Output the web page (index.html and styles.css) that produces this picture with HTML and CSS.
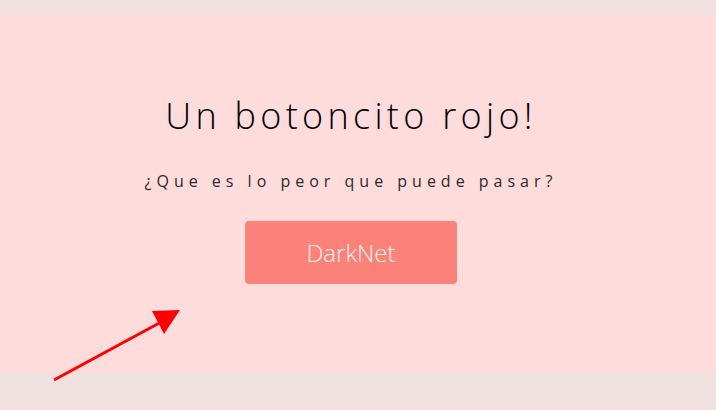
FILE: index.html
```html
<!DOCTYPE html>
<html lang="es">
<head>
<meta charset="utf-8">
<title>Un botoncito rojo</title>
<link rel="stylesheet" href="styles.css">
</head>
<body>
  <section class="hero">
    <h1 class="title">Un botoncito rojo!</h1>
    <p class="subtitle">¿Que es lo peor que puede pasar?</p>
    <a class="btn" href="#">DarkNet</a>
  </section>
  <svg class="arrow" width="140" height="80" viewBox="0 0 140 80">
    <line x1="3" y1="76" x2="112" y2="17" stroke="#ff0000" stroke-width="3"/>
    <polygon points="129,6 101,7 113,30" fill="#ff0000"/>
  </svg>
</body>
</html>
```
FILE: styles.css
```css
html, body {
  margin: 0;
  padding: 0;
}
body {
  background: #f0e0df;
  font-family: "Open Sans", "Lato", sans-serif;
  height: 410px;
  position: relative;
  overflow: hidden;
}
.hero {
  margin-top: 15px;
  height: 357px;
  background: #ffdcdc;
  display: flex;
  flex-direction: column;
  align-items: center;
  padding-top: 78px;
  box-sizing: border-box;
  padding-right: 14px;
}
.title {
  margin: 0;
  font-weight: 300;
  font-size: 36px;
  letter-spacing: 4.3px;
  line-height: 46px;
  color: #000;
}
.subtitle {
  margin: 31px 0 0;
  font-weight: 400;
  font-size: 16px;
  letter-spacing: 5px;
  line-height: 22px;
  color: #2a2a2a;
}
.btn {
  margin-top: 29px;
  width: 212px;
  height: 63px;
  background: #fa8278;
  border-radius: 4px;
  color: #fff4f2;
  text-decoration: none;
  font-size: 24px;
  font-weight: 300;
  display: flex;
  align-items: center;
  justify-content: center;
}
.arrow {
  position: absolute;
  left: 51px;
  top: 304px;
}
```
